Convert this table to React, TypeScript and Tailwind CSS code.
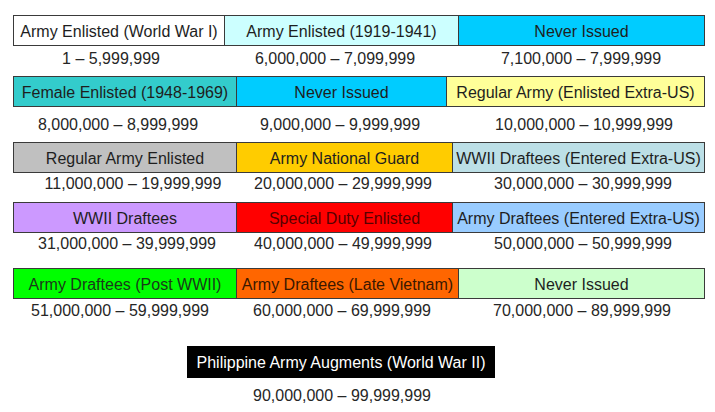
import React from "react";

type Box = { w: string; bg: string; text: string; color?: string };

function BoxRow({ boxes, className }: { boxes: Box[]; className: string }) {
  return (
    <div className={`flex ${className}`}>
      <div className="w-[13px] shrink-0" />
      {boxes.map((b, i) => (
        <div
          key={i}
          className={`${b.w} ${b.bg} ${b.color ?? "text-[#1e1e1e]"} h-[31px] shrink-0 flex items-center justify-center border-y border-l border-[#3a3a3a] ${
            i === boxes.length - 1 ? "border-r" : ""
          } whitespace-nowrap pt-[2px]`}
        >
          {b.text}
        </div>
      ))}
    </div>
  );
}

function RangeRow({ items, className }: { items: { ml: string; text: string }[]; className: string }) {
  return (
    <div className={`flex h-[18px] leading-[18px] text-[#262626] ${className}`}>
      {items.map((it, i) => (
        <div key={i} className={`${it.ml} w-[200px] shrink-0 text-center whitespace-nowrap`}>
          {it.text}
        </div>
      ))}
    </div>
  );
}

export default function App() {
  return (
    <div
      className="w-[715px] h-[412px] bg-white overflow-hidden pt-[15px] text-[16px]"
      style={{ fontFamily: '"Liberation Sans", Arial, sans-serif' }}
    >
      <BoxRow
        className=""
        boxes={[
          { w: "w-[211px]", bg: "bg-white", text: "Army Enlisted (World War I)" },
          { w: "w-[234px]", bg: "bg-[#ccffff]", text: "Army Enlisted (1919-1941)" },
          { w: "w-[247px]", bg: "bg-[#00ccff]", text: "Never Issued" },
        ]}
      />
      <RangeRow
        className="mt-[4px]"
        items={[
          { ml: "ml-[11px]", text: "1 – 5,999,999" },
          { ml: "ml-[24px]", text: "6,000,000 – 7,099,999" },
          { ml: "ml-[46px]", text: "7,100,000 – 7,999,999" },
        ]}
      />
      <BoxRow
        className="mt-[8px]"
        boxes={[
          { w: "w-[223px]", bg: "bg-[#33cccc]", text: "Female Enlisted (1948-1969)" },
          { w: "w-[210px]", bg: "bg-[#00ccff]", text: "Never Issued" },
          { w: "w-[259px]", bg: "bg-[#ffff99]", text: "Regular Army (Enlisted Extra-US)" },
        ]}
      />
      <RangeRow
        className="mt-[9px]"
        items={[
          { ml: "ml-[18px]", text: "8,000,000 – 8,999,999" },
          { ml: "ml-[22px]", text: "9,000,000 – 9,999,999" },
          { ml: "ml-[44px]", text: "10,000,000 – 10,999,999" },
        ]}
      />
      <BoxRow
        className="mt-[8px]"
        boxes={[
          { w: "w-[223px]", bg: "bg-[#c0c0c0]", text: "Regular Army Enlisted" },
          { w: "w-[216px]", bg: "bg-[#ffcc00]", text: "Army National Guard" },
          { w: "w-[253px]", bg: "bg-[#bcdfe6]", text: "WWII Draftees (Entered Extra-US)" },
        ]}
      />
      <RangeRow
        className="mt-[2px]"
        items={[
          { ml: "ml-[33px]", text: "11,000,000 – 19,999,999" },
          { ml: "ml-[10px]", text: "20,000,000 – 29,999,999" },
          { ml: "ml-[40px]", text: "30,000,000 – 30,999,999" },
        ]}
      />
      <BoxRow
        className="mt-[9px]"
        boxes={[
          { w: "w-[223px]", bg: "bg-[#cc99ff]", text: "WWII Draftees" },
          { w: "w-[216px]", bg: "bg-[#ff0000]", text: "Special Duty Enlisted", color: "text-[#580000]" },
          { w: "w-[253px]", bg: "bg-[#99ccff]", text: "Army Draftees (Entered Extra-US)" },
        ]}
      />
      <RangeRow
        className="mt-[2px]"
        items={[
          { ml: "ml-[27px]", text: "31,000,000 – 39,999,999" },
          { ml: "ml-[16px]", text: "40,000,000 – 49,999,999" },
          { ml: "ml-[40px]", text: "50,000,000 – 50,999,999" },
        ]}
      />
      <BoxRow
        className="mt-[15px]"
        boxes={[
          { w: "w-[223px]", bg: "bg-[#00ff00]", text: "Army Draftees (Post WWII)", color: "text-[#1a3a1a]" },
          { w: "w-[222px]", bg: "bg-[#ff6600]", text: "Army Draftees (Late Vietnam)", color: "text-[#3a1800]" },
          { w: "w-[247px]", bg: "bg-[#ccffcc]", text: "Never Issued" },
        ]}
      />
      <RangeRow
        className="mt-[3px]"
        items={[
          { ml: "ml-[20px]", text: "51,000,000 – 59,999,999" },
          { ml: "ml-[22px]", text: "60,000,000 – 69,999,999" },
          { ml: "ml-[40px]", text: "70,000,000 – 89,999,999" },
        ]}
      />
      <div className="flex mt-[26px]">
        <div className="ml-[187px] w-[308px] h-[32px] bg-black text-white flex items-center justify-center whitespace-nowrap pt-[2px]">
          Philippine Army Augments (World War II)
        </div>
      </div>
      <RangeRow
        className="mt-[9px]"
        items={[{ ml: "ml-[242px]", text: "90,000,000 – 99,999,999" }]}
      />
    </div>
  );
}
